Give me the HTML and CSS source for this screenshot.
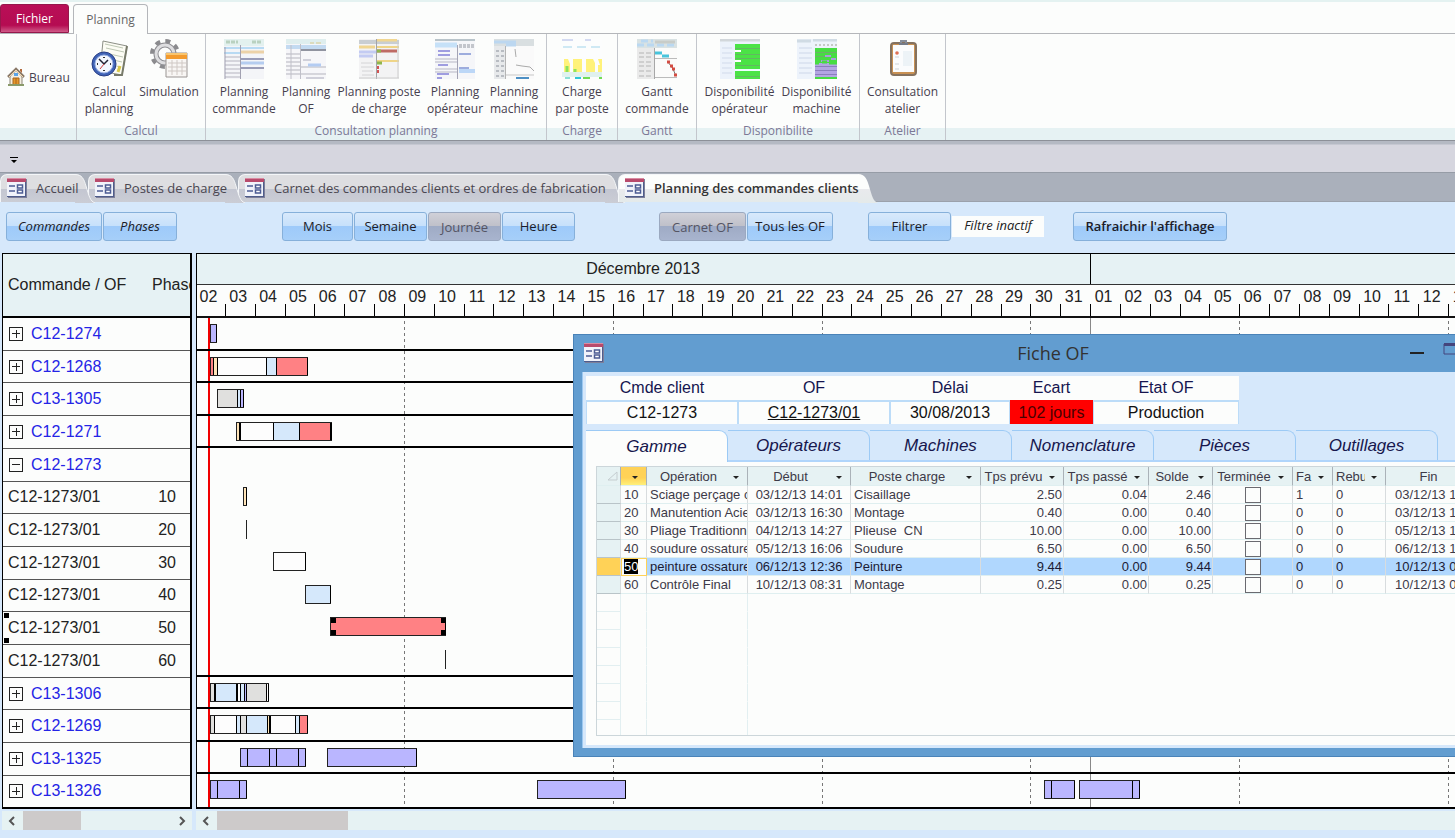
FILE: index.html
```html
<!DOCTYPE html>
<html lang="fr">
<head>
    <meta charset="UTF-8">
    <meta name="viewport" content="width=device-width, initial-scale=1.0">
    <title>Planning des commandes clients</title>
    <link rel="stylesheet" href="styles.css">
</head>
<body>
    <!-- Icône de formulaire réutilisée par les onglets et la fenêtre -->
    <svg class="sprite" aria-hidden="true">
        <defs>
            <linearGradient id="tab-fill" x1="0" y1="0" x2="0" y2="1">
                <stop offset="0" stop-color="#dedee1"/><stop offset=".5" stop-color="#dedee1"/><stop offset=".51" stop-color="#c3c6d1"/><stop offset="1" stop-color="#cbcdd5"/>
            </linearGradient>
            <linearGradient id="active-fill" x1="0" y1="0" x2="0" y2="1">
                <stop offset="0" stop-color="#fcfdfc"/><stop offset=".5" stop-color="#fcfdfc"/><stop offset=".51" stop-color="#e9eaed"/><stop offset="1" stop-color="#e4eaea"/>
            </linearGradient>
        </defs>
        <symbol id="form" viewBox="0 0 20 20">
            <path d="M1 1h19v19H1z" fill="#7d7f99"/>
            <path d="M0 0h18v18H0z" fill="#f1f3fa"/>
            <path d="M0 0h19v4H0z" fill="#b84a6c"/>
            <path d="M0 0h19v1H0z" fill="#d98ba2"/>
            <path d="M18 4h1v15h-1zM0 18h19v1H0z" fill="#4f5d8c"/>
            <path d="M2 8h6M2 13h6" stroke="#4c5c94" stroke-width="1.500"/>
            <path d="M10.500 7h5v3h-5zM10.500 12h5v3h-5z" fill="#fff" stroke="#4c5c94" stroke-width="1.500"/>
        </symbol>
        <symbol id="tail" viewBox="0 0 20 29">
            <path d="M0 0C7 0 9 5 11 12C14 22 15 27 20 29H0z" fill="url(#tab-fill)"/>
            <path d="M0 .5C7 .5 9 5 11 12C14 22 15 27 20 29" fill="none" stroke="#f4f6f8"/>
        </symbol>
        <symbol id="tail-active" viewBox="0 0 20 29">
            <path d="M0 0C7 0 9 5 11 12C14 22 15 27 20 29H0z" fill="url(#active-fill)"/>
        </symbol>
    </svg>

    <nav class="menu">
        <button class="fichier">Fichier</button>
        <button class="menu-tab">Planning</button>
    </nav>

    <header class="ribbon">
        <section class="group bureau">
            <button class="small">
                <svg width="18" height="20" viewBox="0 0 18 20"><path d="M3 9v9h12V9L9 3z" fill="#f4eee0" stroke="#8c8577"/><path d="M1 10l8-8 8 8" fill="none" stroke="#8a7968" stroke-width="2.500"/><path d="M2 10l7-7 7 7" fill="none" stroke="#f2d9b0"/><path d="M13 2h2v4l-2-2z" fill="#b26a3c"/><path d="M6 11h6v7H6z" fill="#e6972c" stroke="#a8651b"/><path d="M9 11v7" stroke="#a8651b"/><path d="M7 6h4v3H7z" fill="#5aa4e8"/><path d="M1 18h16" stroke="#8a9a6a" stroke-width="2"/></svg>
                Bureau
            </button>
            <h2></h2>
        </section>
        <section class="group calcul">
            <div class="buttons">
                <button>
                    <svg viewBox="0 0 40 40"><path d="M14 2l24 5-5 29-22-4z" fill="#fcfcf4" stroke="#8c8f86"/><path d="M38 7l-5 29-8 0" fill="none" stroke="#777a6a" stroke-width="2"/><path d="M17 9l18 4M16 14l18 4M20 20l13 3M22 26l10 2M16 5l18 4" stroke="#bdc7b4"/><path d="M31 27l-2 6" stroke="#d8c84a" stroke-width="3"/><circle cx="15" cy="25" r="12" fill="#3f62b5" stroke="#2a3f86"/><circle cx="15" cy="25" r="9" fill="#f4f7ff" stroke="#9bb2e4"/><path d="M15 18v1M15 31v1M8 25h1M21 25h1" stroke="#333" stroke-width="2"/><path d="M10 20l5 5 4-4" fill="none" stroke="#223" stroke-width="1.500"/><path d="M15 25l-4 5" stroke="#d13b3b"/></svg>
                    <span>Calcul<br>planning</span>
                </button>
                <button>
                    <svg viewBox="0 0 40 40"><circle cx="16" cy="15" r="13" fill="none" stroke="#8b8b8e" stroke-width="4" stroke-dasharray="5 5.200"/><circle cx="16" cy="15" r="9" fill="none" stroke="#8f8f93" stroke-width="5"/><circle cx="16" cy="15" r="9" fill="none" stroke="#dedee0" stroke-width="3"/><path d="M17 14h21v24H17z" fill="#f8f6f4" stroke="#9a9593"/><path d="M17 14h21v6H17z" fill="#f39b2e"/><path d="M17 14h21v2H17z" fill="#f9c56e"/><path d="M19 24h18M19 28h18M19 32h18M23 21v15M28 21v15M33 21v15" stroke="#cfc8c4"/></svg>
                    <span>Simulation</span>
                </button>
            </div>
            <h2>Calcul</h2>
        </section>
        <section class="group consult">
            <div class="buttons">
                <button>
                    <svg viewBox="0 0 40 40"><path d="M0 0h40v40H0z" fill="#f4f5f8"/><path d="M0 0h40v7H0z" fill="#e3f1ef"/><path d="M2 3h12M28 3h10" stroke="#b9d1c0" stroke-width="3" stroke-dasharray="4 1"/><path d="M0 9h40M0 14h16" stroke="#b8daf3" stroke-width="2"/><path d="M17 13h23" stroke="#ecd2a8" stroke-width="3"/><path d="M17 20h23M17 29h23" stroke="#9a9db8" stroke-width="2"/><path d="M17 24h23" stroke="#b5cdf0" stroke-width="3"/><path d="M1 18h15M1 22h15M1 26h15M1 30h15M1 34h15M1 38h15" stroke="#b5b4bf"/><path d="M1 8v32M16.500 6v34" stroke="#a2a1b1"/></svg>
                    <span>Planning<br>commande</span>
                </button>
                <button>
                    <svg viewBox="0 0 40 40"><path d="M0 0h40v40H0z" fill="#f6f6f9"/><path d="M0 0h40v5H0z" fill="#dfeeee"/><path d="M0 8h40" stroke="#c3daf1" stroke-width="4"/><path d="M14 11h26" stroke="#90939f" stroke-width="2"/><path d="M0 15h14M0 19h14M0 23h14M0 27h14M0 31h14M0 35h14M14 28h26M14 35h26" stroke="#b5b5be"/><path d="M5 6v34M14.500 5v35" stroke="#c0c0c9"/><path d="M22 26h13" stroke="#b4ccf2" stroke-width="3"/><path d="M17 21h8M20 39h18" stroke="#aab"/><path d="M24 4h4M30 4h5" stroke="#d8c88c"/></svg>
                    <span>Planning<br>OF</span>
                </button>
                <button>
                    <svg viewBox="0 0 40 40"><path d="M0 0h40v40H0z" fill="#f3f3f4"/><path d="M0 3h40" stroke="#c9ced2" stroke-width="4"/><path d="M18 1h20M0 8h16" stroke="#f0d691" stroke-width="3"/><path d="M0 13h18M0 17h14" stroke="#c3cbf2" stroke-width="3"/><path d="M18 8h22M18 22h22" stroke="#efd588" stroke-width="2"/><path d="M18 12h20" stroke="#bf6b65" stroke-width="3"/><path d="M18 12h4M18 24h5" stroke="#8fb64d" stroke-width="3"/><path d="M19 27v3M19 31v3" stroke="#d35454" stroke-width="2"/><path d="M2 24h12M2 28h13M3 32h11M3 36h12" stroke="#d4d4d6"/><path d="M17.500 0v40" stroke="#a2a4a7"/><path d="M0 39h40M39 4v35" stroke="#ccc"/></svg>
                    <span>Planning poste<br>de charge</span>
                </button>
                <button>
                    <svg viewBox="0 0 40 40"><path d="M0 0h40v40H0z" fill="#f5f6f9"/><path d="M0 1h40" stroke="#b9c4ca" stroke-width="2"/><path d="M0 6h22" stroke="#c6e1f8" stroke-width="5"/><path d="M24 7h16" stroke="#c3c6cc" stroke-width="4" stroke-dasharray="3 1"/><path d="M3 12h12M3 16h12M3 26h10M2 35h12M2 39h5" stroke="#9f9de0" stroke-width="2"/><path d="M0 20h22M0 23h22M0 30h22M0 33h22" stroke="#b7b7c5"/><path d="M22.500 6v34" stroke="#a3a3b4"/><path d="M24 15h12M24 29h10" stroke="#9dacdd" stroke-width="2"/><path d="M24 32h16" stroke="#bcd7f7" stroke-width="4"/></svg>
                    <span>Planning<br>opérateur</span>
                </button>
                <button>
                    <svg viewBox="0 0 40 40"><path d="M0 0h40v40H0z" fill="#fafafa"/><path d="M0 0h40v7H0z" fill="#d9dfe1"/><path d="M0 3h22M12 6h10" stroke="#bcd7f0" stroke-width="3"/><path d="M0 7h12v33H0z" fill="#e7e9eb"/><path d="M2 12h8M2 17h8M2 22h8M2 27h8M2 32h8M2 37h8" stroke="#b8bcc2" stroke-width="2" stroke-dasharray="3 2"/><path d="M11.500 7v33" stroke="#b4b4b4"/><path d="M21 10l1 8M22 26l6 1 8 1 4 4" stroke="#aaa" fill="none"/><path d="M12 36h28" stroke="#c7c7c7"/><path d="M22 39h13" stroke="#4d8fc4" stroke-width="2"/></svg>
                    <span>Planning<br>machine</span>
                </button>
            </div>
            <h2>Consultation planning</h2>
        </section>
        <section class="group charge">
            <div class="buttons">
                <button>
                    <svg viewBox="0 0 40 40"><path d="M0 0h40v40H0z" fill="#fcfdfd"/><path d="M0 1h11M23 1h6" stroke="#abb7e6"/><path d="M1 8h38" stroke="#cfe9f4" stroke-width="2" stroke-dasharray="9 5"/><path d="M2 20h4l2 5v8H2zM11 20h9v13h-9zM24 20h7l2 4v9h-9zM36 20h4v13h-4v-7h2z" fill="#fff27a"/><path d="M5 27v6M13 30v3" stroke="#8ce35c" stroke-width="3"/><path d="M0 33h40v5H0z" fill="#e0f1ef"/><path d="M13 39h6" stroke="#2cc6d8" stroke-width="2"/><path d="M21 39h7M37 39h3" stroke="#72dc54" stroke-width="2"/><path d="M3 39h5" stroke="#8ce0d6" stroke-width="2"/></svg>
                    <span>Charge<br>par poste</span>
                </button>
            </div>
            <h2>Charge</h2>
        </section>
        <section class="group gantt-group">
            <div class="buttons">
                <button>
                    <svg viewBox="0 0 40 40"><path d="M0 0h40v40H0z" fill="#fbfbfa"/><path d="M0 0h40v9H0z" fill="#d9e2e3"/><path d="M0 6h40M4 2h12" stroke="#bad8f1" stroke-width="3" stroke-dasharray="7 3"/><path d="M18 3h20" stroke="#c8ccc8" stroke-width="3"/><path d="M0 9h17v31H0z" fill="#eaeaea"/><path d="M2 14h14M2 18h14M2 23h14M2 27h14M2 32h14M2 37h14" stroke="#b4b4b4" stroke-dasharray="5 2"/><path d="M17.500 9v31" stroke="#a7a7a7"/><path d="M18 14h7M25 17h7" stroke="#48c4db" stroke-width="3"/><path d="M18 19.500h22M18 38.500h22" stroke="#bbb"/><path d="M31 23l5 7 3 7" stroke="#777" fill="none"/><path d="M30 23h3M33 27h3M35 30h3M37 36h3" stroke="#d34c42" stroke-width="3"/></svg>
                    <span>Gantt<br>commande</span>
                </button>
            </div>
            <h2>Gantt</h2>
        </section>
        <section class="group dispo">
            <div class="buttons">
                <button>
                    <svg viewBox="0 0 40 40"><path d="M0 0h40v40H0z" fill="#ecf2fb"/><path d="M0 1h40" stroke="#d2d7db" stroke-width="3"/><path d="M15 5h25v35H15z" fill="#4be346"/><path d="M15 12h6M15 22h6" stroke="#fff" stroke-width="2"/><path d="M15 9.500h25M15 15.500h25M15 19.500h25M15 26.500h25M15 37.500h25" stroke="#62b861"/><path d="M15 31h25" stroke="#eff" stroke-width="2"/><path d="M2 9h10M2 14h10M2 19h10M2 24h10M2 29h10M2 34h10" stroke="#d1daeb"/></svg>
                    <span>Disponibilité<br>opérateur</span>
                </button>
                <button>
                    <svg viewBox="0 0 40 40"><path d="M0 0h40v40H0z" fill="#edf3fb"/><path d="M0 2h14M16 1h24" stroke="#d0dbe4" stroke-width="3"/><path d="M18 9h22v31H18z" fill="#47dc43"/><path d="M18 6h22" stroke="#c5c9c4" stroke-width="2" stroke-dasharray="2 2"/><path d="M24 22h8M34 20h5M28 17h6" stroke="#a99bdd" stroke-width="2"/><path d="M18 24h22v14H18z" fill="#b3a5e3"/><path d="M18 27.500h22M18 31.500h22M18 35.500h22" stroke="#8b7fbd"/><path d="M18 24h4M25 23h5M32 24h8" stroke="#47dc43" stroke-width="3"/><path d="M18 13.500h22M18 17.500h10" stroke="#6dae6a"/><path d="M2 9h13M2 14h13M2 19h13M2 24h13M2 29h13M2 34h13" stroke="#cdd7e9"/></svg>
                    <span>Disponibilité<br>machine</span>
                </button>
            </div>
            <h2>Disponibilite</h2>
        </section>
        <section class="group atelier">
            <div class="buttons">
                <button>
                    <svg viewBox="0 0 40 40"><rect x="8" y="4" width="25" height="32" rx="3" fill="#c99153" stroke="#85725f" stroke-width="2"/><path d="M10 6h21v27H10z" fill="#fbfcfd"/><path d="M20 12h9v15h-9z" fill="#edf3f7"/><path d="M16 4h9v2h-9z" fill="#757b88"/><path d="M18 4V2h5v2" fill="none" stroke="#868d9a" stroke-width="2"/><circle cx="14" cy="14" r="1.800" fill="#e07054"/><path d="M12 18h4M12 25h4M12 30h4" stroke="#cdd3d8"/></svg>
                    <span>Consultation<br>atelier</span>
                </button>
            </div>
            <h2>Atelier</h2>
        </section>
        <div class="group-rest"></div>
    </header>

    <div class="quickbar">
        <button aria-label="Personnaliser"><svg width="8" height="7" viewBox="0 0 8 7"><path d="M0 0h8v1H0zM1 3h6L4 6z"/></svg></button>
    </div>

    <nav class="doc-tabs">
        <a href="#" class="doc-tab t1"><svg class="icon"><use href="#form"/></svg><span>Accueil</span><svg class="tail"><use href="#tail"/></svg></a>
        <a href="#" class="doc-tab t2"><svg class="icon"><use href="#form"/></svg><span>Postes de charge</span><svg class="tail"><use href="#tail"/></svg></a>
        <a href="#" class="doc-tab t3"><svg class="icon"><use href="#form"/></svg><span>Carnet des commandes clients et ordres de fabrication</span><svg class="tail"><use href="#tail"/></svg></a>
        <a href="#" class="doc-tab t4 active"><svg class="icon"><use href="#form"/></svg><span>Planning des commandes clients</span><svg class="tail"><use href="#tail-active"/></svg></a>
    </nav>

    <main>
        <div class="toolbar">
            <div class="set niveau"><button>Commandes</button><button>Phases</button></div>
            <div class="set echelle"><button>Mois</button><button>Semaine</button><button class="on">Journée</button><button>Heure</button></div>
            <div class="set liste"><button class="on">Carnet OF</button><button>Tous les OF</button></div>
            <div class="set filtre"><button>Filtrer</button><output>Filtre inactif</output></div>
            <div class="set maj"><button>Rafraichir l'affichage</button></div>
        </div>

        <div class="panels">
            <div class="left">
                <table class="orders">
                    <thead>
                        <tr><th>Commande / OF</th><th>Phase</th></tr>
                    </thead>
                    <tbody>
                        <tr><td colspan="2"><button class="plus" aria-label="Ouvrir"></button><a href="#">C12-1274</a></td></tr>
                        <tr><td colspan="2"><button class="plus" aria-label="Ouvrir"></button><a href="#">C12-1268</a></td></tr>
                        <tr><td colspan="2"><button class="plus" aria-label="Ouvrir"></button><a href="#">C13-1305</a></td></tr>
                        <tr><td colspan="2"><button class="plus" aria-label="Ouvrir"></button><a href="#">C12-1271</a></td></tr>
                        <tr><td colspan="2"><button class="plus minus" aria-label="Fermer"></button><a href="#">C12-1273</a></td></tr>
                        <tr><td>C12-1273/01</td><td>10</td></tr>
                        <tr><td>C12-1273/01</td><td>20</td></tr>
                        <tr><td>C12-1273/01</td><td>30</td></tr>
                        <tr><td>C12-1273/01</td><td>40</td></tr>
                        <tr class="picked"><td>C12-1273/01</td><td>50</td></tr>
                        <tr><td>C12-1273/01</td><td>60</td></tr>
                        <tr><td colspan="2"><button class="plus" aria-label="Ouvrir"></button><a href="#">C13-1306</a></td></tr>
                        <tr><td colspan="2"><button class="plus" aria-label="Ouvrir"></button><a href="#">C12-1269</a></td></tr>
                        <tr><td colspan="2"><button class="plus" aria-label="Ouvrir"></button><a href="#">C13-1325</a></td></tr>
                        <tr><td colspan="2"><button class="plus" aria-label="Ouvrir"></button><a href="#">C13-1326</a></td></tr>
                    </tbody>
                </table>
                <div class="scroll">
                    <svg viewBox="0 0 8 10"><path d="M6 1L2 5l4 4"/></svg>
                    <div class="thumb"></div>
                    <svg viewBox="0 0 8 10"><path d="M2 1l4 4-4 4"/></svg>
                </div>
            </div>

            <div class="right">
                <div class="chart">
                    <div class="months days-grid"><span>Décembre 2013</span><span></span></div>
                    <div class="days days-grid" id="days"></div>
                    <div class="body">
                        <div class="weeks days-grid"><i></i><i></i><i></i><i></i><i></i><i></i></div>
                        <div class="weeks days-grid"><b></b></div>
                        <div class="today"></div>
                        <div class="rows" id="rows"></div>
                    </div>
                </div>
                <div class="scroll">
                    <svg viewBox="0 0 8 10"><path d="M6 1L2 5l4 4"/></svg>
                    <div class="thumb"></div>
                </div>
            </div>
        </div>
    </main>

    <section class="window">
        <div class="title">
            <svg class="icon"><use href="#form"/></svg>
            <h1>Fiche OF</h1>
            <div class="controls">
                <button aria-label="Réduire"><svg width="14" height="12"><path d="M0 9h14v2H0z" fill="#222"/></svg></button>
                <button aria-label="Agrandir"><svg width="14" height="12"><path d="M1 1h12v10H1z" fill="none" stroke="#44447c"/><path d="M1 0h12v3H1z" fill="#44447c"/></svg></button>
                <button aria-label="Fermer"><svg width="14" height="12"><path d="M2 1l10 10M12 1L2 11" stroke="#222"/></svg></button>
            </div>
        </div>
        <div class="inner">
            <table class="fiche">
                <tr><th>Cmde client</th><th>OF</th><th>Délai</th><th>Ecart</th><th>Etat OF</th></tr>
                <tr><td>C12-1273</td><td><a href="#">C12-1273/01</a></td><td>30/08/2013</td><td class="retard">102 jours</td><td>Production</td></tr>
            </table>
            <div class="fiche-tabs">
                <button class="active">Gamme</button>
                <button>Opérateurs</button>
                <button>Machines</button>
                <button>Nomenclature</button>
                <button>Pièces</button>
                <button>Outillages</button>
            </div>
            <div class="page">
                <table class="gamme">
                    <colgroup><col class="c-sel"><col class="c-num"><col class="c-op"><col class="c-deb"><col class="c-poste"><col class="c-prevu"><col class="c-passe"><col class="c-solde"><col class="c-term"><col class="c-fa"><col class="c-rebu"><col class="c-fin"></colgroup>
                    <thead>
                        <tr><th><svg width="12" height="10" viewBox="0 0 12 10"><path d="M10 1L1 9h9z" fill="none" stroke="#c5cdd0"/></svg></th><th><i></i></th><th>Opération<i></i></th><th>Début<i></i></th><th>Poste charge<i></i></th><th>Tps prévu<i></i></th><th>Tps passé<i></i></th><th>Solde<i></i></th><th>Terminée<i></i></th><th>Fa<i></i></th><th><span>Rebut</span><i></i></th><th>Fin<i></i></th></tr>
                    </thead>
                    <tbody id="gamme"></tbody>
                </table>
            </div>
        </div>
    </section>

    <script src="script.js"></script>
</body>
</html>
```
FILE: styles.css
```css
* {
    box-sizing: border-box;
}
body {
    margin: 0;
    position: relative;
    min-height: 100vh;
    overflow: hidden;
    background-color: #d6e8fb;
    font-family: "Open Sans", "Noto Sans", sans-serif;
    font-size: 13px;
    color: #222;
}
button {
    font: inherit;
    color: inherit;
    background: none;
    border: none;
    padding: 0;
    white-space: nowrap;
}
a {
    color: inherit;
    text-decoration: none;
}
h1, h2 {
    margin: 0;
    font-weight: normal;
}
.sprite {
    position: absolute;
    width: 0;
    height: 0;
}
.icon {
    flex: none;
    width: 20px;
    height: 20px;
}

/* Menu */
.menu {
    display: flex;
    gap: 4px;
    height: 34px;
    padding-top: 2px;
    border-top: 2px solid #e4f2f1;
    border-bottom: 1px solid #b4b6ba;
    background-color: #fcfdfc;
    font-size: 12px;
}
.fichier {
    width: 69px;
    height: 29px;
    border: 1px solid #96184c;
    border-radius: 3px 3px 0 0;
    background: linear-gradient(#b90f57, #b50c52 75%, #d05a88);
    color: #fff;
}
.menu-tab {
    width: 75px;
    height: 30px;
    border: 1px solid #b4b6ba;
    border-bottom: none;
    border-radius: 4px 4px 0 0;
    background-color: #fcfdfc;
    color: #666;
}

/* Ruban */
.ribbon {
    display: flex;
    height: 107px;
    background-color: #fcfdfc;
    border-bottom: 1px solid #8c9098;
    font-size: 12px;
    line-height: 17px;
    color: #46404e;
}
.group {
    flex: none;
    display: flex;
    flex-direction: column;
    justify-content: space-between;
    border-right: 1px solid #c3c6cc;
}
.group h2, .group-rest {
    font-size: 12px;
    height: 12px;
    line-height: 5px;
    text-align: center;
    color: #7c7896;
    background-color: #e6f2f3;
}
.group-rest {
    flex: 1;
    align-self: flex-end;
}
.buttons {
    display: flex;
    justify-content: center;
    padding-top: 5px;
}
.buttons button {
    display: flex;
    flex-direction: column;
    align-items: center;
    gap: 4px;
    width: 60px;
}
.buttons svg {
    width: 40px;
    height: 40px;
}
.bureau { width: 77px; }
.calcul { width: 129px; }
.consult { width: 341px; }
.charge { width: 71px; }
.gantt-group { width: 79px; }
.dispo { width: 163px; }
.atelier { width: 86px; }
.calcul .buttons { padding-right: 4px; }
.consult button:nth-child(1) { width: 64px; }
.consult button:nth-child(3) { width: 86px; }
.consult button:nth-child(4) { width: 66px; }
.consult button:nth-child(5) { width: 52px; }
.dispo button { width: 77px; }
.small {
    display: flex;
    align-items: center;
    gap: 4px;
    padding: 33px 0 0 7px;
}

.quickbar {
    display: flex;
    align-items: center;
    height: 31px;
    padding: 4px 0 0 10px;
    background: linear-gradient(#b4b9c3 3px, #d6d6df 4px);
}

/* Onglets des documents */
.doc-tabs {
    display: flex;
    height: 30px;
    padding-top: 1px;
    border-top: 1px solid #969ca6;
    border-bottom: 1px solid #9ba1ab;
    background-color: #aab0bb;
    color: #4a4650;
}
.doc-tab {
    position: relative;
    display: flex;
    align-items: center;
    gap: 9px;
    height: 28px;
    margin-right: 13px;
    padding: 0 0 1px 6px;
    border-top: 1px solid #f4f6f8;
    border-left: 1px solid #f4f6f8;
    border-radius: 7px 0 0 0;
    background: linear-gradient(#dedee1 50%, #c3c6d1 51%, #cbcdd5);
    white-space: nowrap;
}
.doc-tab span {
    position: relative;
    z-index: 1;
}
.tail {
    position: absolute;
    left: 100%;
    top: -1px;
    width: 20px;
    height: 29px;
}
.t1 { z-index: 4; width: 75px; }
.t2 { z-index: 3; width: 137px; }
.t3 { z-index: 2; width: 367px; }
.t4 { z-index: 5; width: 240px; }
.doc-tab.active {
    background: linear-gradient(#fcfdfc 50%, #e9eaed 51%, #e4eaea);
    font-weight: 600;
    color: #333;
}

/* Barre de boutons */
.toolbar {
    display: flex;
    padding: 10px 0 0 6px;
    height: 51px;
}
.set {
    display: flex;
    gap: 1px;
    height: 29px;
}
.set button {
    padding-bottom: 2px;
    border: 1px solid #86b0da;
    border-radius: 3px;
    background: linear-gradient(#d8e9fb, #c6e0fb 49%, #9ecafa 50%, #a6cff9);
    color: #1c1c28;
}
.set .on {
    padding: 0;
    background: linear-gradient(#d0d0d8, #bfc0c9 49%, #9fabc5 50%, #a8b4ce);
    border-color: #9ba9c0;
    color: #545464;
}
.niveau { margin-right: 105px; font-style: italic; }
.niveau button { width: 96px; }
.niveau button + button { width: 74px; }
.echelle { margin-right: 84px; }
.echelle button { width: 73px; }
.echelle button:first-child { width: 71px; }
.liste { margin-right: 35px; }
.liste button { width: 87px; }
.liste button + button { width: 86px; }
.filtre { margin-right: 29px; align-items: flex-start; }
.filtre button { width: 83px; height: 29px; }
.filtre output {
    width: 92px;
    height: 21px;
    margin-top: 4px;
    background-color: #fcfdfc;
    font-size: 13px;
    font-style: italic;
    line-height: 19px;
    text-align: center;
}
.maj button { width: 154px; font-weight: 600; }

/* Panneaux du planning */
.panels {
    display: flex;
    gap: 4px;
    padding-left: 2px;
    font-family: "Liberation Sans", Arial, sans-serif;
    font-size: 16px;
}
.left {
    flex: none;
    width: 190px;
}
.orders {
    width: 190px;
    height: 556px;
    table-layout: fixed;
    border-collapse: separate;
    border-spacing: 0;
    border: 1px solid #000;
    border-right-width: 2px;
    border-bottom-width: 2px;
    background-color: #fcfdfc;
}
.orders th {
    height: 64px;
    padding: 0 0 0 5px;
    border-bottom: 2px solid #000;
    background-color: #e6f2f4;
    font-weight: normal;
    text-align: left;
    white-space: nowrap;
    overflow: hidden;
}
.orders th + th {
    width: 43px;
}
.orders td {
    position: relative;
    padding: 0 0 0 5px;
    border-bottom: 1px solid #555;
}
.orders tr:last-child td {
    border-bottom: none;
}
.orders td + td {
    padding: 0 14px 0 0;
    text-align: right;
}
.orders a {
    color: #2424e6;
}
.plus {
    display: inline-block;
    width: 14px;
    height: 14px;
    margin: 0 8px 0 1px;
    border: 1px solid #222;
    vertical-align: -1px;
    background: linear-gradient(#222, #222) center / 8px 1px no-repeat, linear-gradient(#222, #222) center / 1px 8px no-repeat;
}
.plus.minus {
    background: linear-gradient(#222, #222) center / 8px 1px no-repeat;
}
.picked td:first-child::before, .picked td:first-child::after {
    content: "";
    position: absolute;
    left: 1px;
    top: 1px;
    width: 5px;
    height: 5px;
    background-color: #000;
}
.picked td:first-child::after {
    top: auto;
    bottom: 1px;
}
.scroll {
    display: flex;
    align-items: center;
    height: 19px;
    margin-top: 2px;
    padding: 0 6px;
    background-color: #e6f2f3;
}
.scroll svg {
    flex: none;
    width: 8px;
    height: 10px;
    fill: none;
    stroke: #555;
    stroke-width: 2;
}
.thumb {
    width: 58px;
    height: 19px;
    margin: 0 auto 0 7px;
    background-color: #cdcaca;
}
.right {
    flex: 1;
    min-width: 0;
}
.right .thumb {
    width: 131px;
}
.chart {
    overflow: hidden;
    border: solid #000;
    border-width: 1px 0 2px 1px;
    background-color: #fcfdfc;
}
.days-grid {
    display: grid;
    grid-template-columns: repeat(43, 1fr);
    width: 1283px;
    margin-left: -1px;
}
.months {
    height: 31px;
    line-height: 30px;
    border-bottom: 1px solid #333;
    background-color: #e6f2f4;
    text-align: center;
}
.months span:first-child {
    grid-column: span 30;
    border-right: 1px solid #000;
}
.days {
    height: 33px;
    border-bottom: 2px solid #111;
}
.days span {
    padding-right: 5px;
    line-height: 24px;
    text-align: center;
    background: linear-gradient(#000, #000) right bottom / 1px 12px no-repeat;
}
.body {
    position: relative;
    height: 489px;
}
.weeks {
    position: absolute;
    top: 0;
    bottom: 0;
    left: 0;
}
.weeks i {
    grid-column: span 7;
    background: repeating-linear-gradient(transparent 0 3px, #777 3px 6px) right / 1px 100% no-repeat;
}
.weeks b {
    grid-column: span 30;
    border-right: 1px solid #888;
}
.today {
    position: absolute;
    top: 0;
    bottom: 0;
    left: 11px;
    width: 2px;
    background-color: #f00000;
}
.rows {
    position: relative;
    display: grid;
    grid-template-rows: repeat(15, 1fr);
    height: 100%;
    margin-left: -1px;
}
.row {
    position: relative;
    border-bottom: 2px solid #000;
}
.row.open, .row:last-child {
    border-bottom-color: transparent;
}
.bar {
    position: absolute;
    top: 6px;
    display: flex;
    height: 19px;
    border: solid #222;
    border-width: 1px 0 1px 1px;
}
.bar span {
    flex: none;
    border-right: 1px solid #000;
}
.bar .thick {
    border-right-width: 2px;
}
.violet { background-color: #bab6ff; }
.rouge { background-color: #ff8184; }
.bleu { background-color: #d5e8fb; }
.beige { background-color: #ffe4b8; }
.gris { background-color: #e0e0de; }
.blanc { background-color: #fdfdfd; }
.bar.picked {
    background:
        linear-gradient(#000, #000) left top / 5px 5px no-repeat,
        linear-gradient(#000, #000) right top / 5px 5px no-repeat,
        linear-gradient(#000, #000) left bottom / 5px 5px no-repeat,
        linear-gradient(#000, #000) right bottom / 5px 5px no-repeat,
        #ff8184;
}
.bar.picked span {
    background: none;
}

/* Fenêtre Fiche OF, posée sur le planning */
.window {
    position: absolute;
    z-index: 10;
    top: 334px;
    left: 573px;
    right: -76px;
    border: 1px solid #4a83b8;
    padding: 0 8px 8px;
    background-color: #629dd0;
    font-family: "Liberation Sans", Arial, sans-serif;
    font-size: 16px;
}
.title {
    display: grid;
    grid-template-columns: 1fr auto 1fr;
    align-items: center;
    height: 37px;
    padding: 0 0 2px 2px;
}
.title h1 {
    font: 18px "Open Sans", sans-serif;
    color: #333;
}
.controls {
    display: flex;
    justify-content: flex-end;
    gap: 19px;
    padding: 0 32px 8px 0;
}
.controls svg {
    display: block;
}
.inner {
    padding: 4px 0 3px 3px;
    border-left: 1px solid #9cc8f0;
    background-color: #d6e8fb;
}
.fiche {
    width: 653px;
    table-layout: fixed;
    border-collapse: separate;
    border-spacing: 0;
    text-align: center;
}
.fiche th, .fiche td {
    height: 24px;
    padding: 0;
    background-color: #fcfdfc;
    font-weight: normal;
    color: #15154f;
}
.fiche td {
    border: solid #bcdcf8;
    border-width: 2px 1px 0 1px;
    color: #111;
}
.fiche th:nth-child(1), .fiche th:nth-child(2) { width: 152px; }
.fiche th:nth-child(3) { width: 120px; }
.fiche th:nth-child(4) { width: 83px; }
.fiche a {
    text-decoration: underline;
}
.fiche .retard {
    background-color: #f00;
    border-color: #f00;
    color: #4a0000;
}
.fiche-tabs {
    display: flex;
    height: 32px;
    margin-top: 6px;
    border-bottom: 2px solid #b0d5fb;
}
.fiche-tabs button {
    width: 142px;
    height: 30px;
    border: 1px solid #9ccaf5;
    border-left: none;
    border-bottom: none;
    border-radius: 0 9px 0 0;
    font-size: 17px;
    font-style: italic;
    color: #17174d;
}
.fiche-tabs .active {
    height: 32px;
    background-color: #fcfdfc;
}
.page {
    height: 283px;
    padding: 4px 0 0 10px;
    background-color: #fcfdfc;
}
.gamme {
    width: 893px;
    table-layout: fixed;
    border-collapse: separate;
    border-spacing: 0;
    border: solid #ccd6da;
    border-width: 1px 0 1px 1px;
    font-size: 13px;
    color: #3d3a48;
}
.gamme th, .gamme td {
    height: 18px;
    padding: 0 3px;
    line-height: 17px;
    overflow: hidden;
    white-space: nowrap;
    border-right: 1px solid #d8dcde;
    border-bottom: 1px solid #dfeff0;
}
.gamme th {
    position: relative;
    height: 19px;
    padding-right: 20px;
    background-color: #e6f2f3;
    border-right-color: #aab2b8;
    font-weight: normal;
    text-align: center;
}
.gamme th:first-child {
    padding: 0 0 0 8px;
}
.gamme th:nth-child(2) {
    background: linear-gradient(#ffd257 60%, #fff07a);
}
.gamme th i {
    position: absolute;
    right: 8px;
    top: 9px;
    border: 3px solid transparent;
    border-top-color: #222;
}
.gamme th span {
    display: block;
    overflow: hidden;
}
.gamme th:nth-child(10), .gamme th:nth-child(11) {
    text-align: left;
}
.gamme td:first-child {
    background-color: #e6f2f3;
    border-bottom-color: #b9c4c8;
}
.gamme td:nth-child(4) {
    text-align: center;
}
.gamme td:nth-child(6), .gamme td:nth-child(7), .gamme td:nth-child(8) {
    padding-right: 1px;
    text-align: right;
}
.gamme td:nth-child(9) {
    text-align: center;
}
.gamme td:nth-child(12) {
    padding-left: 9px;
}
.gamme input {
    appearance: none;
    display: block;
    width: 16px;
    height: 16px;
    margin: 0 auto;
    border: 1px solid #6a6a70;
    background-color: #fcfdfc;
}
.gamme .current td {
    background-color: #b0d7fe;
    color: #1b1b35;
}
.gamme .current td:first-child {
    background-color: #ffd257;
}
.gamme .current td:nth-child(2) {
    padding: 0 2px;
    line-height: 14px;
    border: 1px solid #ffd257;
    background-color: #fcfdfc;
}
.gamme mark {
    background-color: #000;
    color: #fff;
}
.gamme .empty td {
    border-color: transparent;
}
.gamme .empty td:first-child {
    background: none;
    border-color: #e2eff1;
}
.gamme .empty td:nth-child(2), .gamme .empty td:nth-child(3) {
    border-right-color: #e2eff1;
}
.gamme tr:last-child td {
    height: 15px;
    border-bottom: none;
}
.c-sel { width: 24px; }
.c-num { width: 26px; }
.c-op { width: 101px; }
.c-deb { width: 103px; }
.c-poste { width: 130px; }
.c-prevu { width: 83px; }
.c-passe { width: 85px; }
.c-solde { width: 64px; }
.c-term { width: 80px; }
.c-fa { width: 40px; }
.c-rebu { width: 53px; }
```
FILE: script.js
```js
// Jours affichés : du 2 décembre au 13 janvier
const days = document.getElementById('days');
for (let i = 0; i < 43; i++) {
    const span = document.createElement('span');
    const day = i < 30 ? i + 2 : i - 29;
    span.textContent = String(day).padStart(2, '0');
    days.appendChild(span);
}

// Une ligne = liste de barres, une barre = départ puis segments [largeur, couleur]
const rows = [
    [{ x: 14, s: [[6, 'violet']] }],
    [{ x: 14, s: [[3, 'rouge'], [4, 'beige'], [49, 'blanc'], [10, 'bleu'], [31, 'rouge']] }],
    [{ x: 21, s: [[20, 'gris'], [3, 'bleu'], [3, 'violet']] }],
    [{ x: 40, s: [[4, 'beige thick'], [33, 'blanc'], [26, 'bleu'], [32, 'rouge thick']] }],
    [],
    [{ x: 47, s: [[3, 'beige']] }],
    [{ x: 50, s: [] }],
    [{ x: 77, s: [[32, 'blanc']] }],
    [{ x: 109, s: [[25, 'bleu']] }],
    [{ x: 134, s: [[115, 'rouge']], picked: true }],
    [{ x: 249, s: [] }],
    [{ x: 14, s: [[5, 'gris thick'], [22, 'bleu thick'], [3, 'blanc'], [4, 'bleu'], [2, 'violet'], [20, 'gris'], [2, 'blanc']] }],
    [{ x: 14, s: [[4, 'gris'], [22, 'blanc'], [4, 'bleu'], [6, 'gris'], [21, 'bleu'], [3, 'beige thick'], [25, 'blanc'], [4, 'bleu'], [8, 'rouge']] }],
    [{ x: 44, s: [[7, 'violet'], [22, 'violet'], [7, 'violet'], [22, 'violet'], [7, 'violet']] },
     { x: 131, s: [[89, 'violet']] }],
    [{ x: 14, s: [[7, 'violet'], [22, 'violet'], [7, 'violet']] },
     { x: 341, s: [[88, 'violet']] },
     { x: 848, s: [[7, 'violet'], [23, 'violet']] },
     { x: 883, s: [[53, 'violet'], [7, 'violet']] }]
];
const rowsDiv = document.getElementById('rows');
rows.forEach((bars, i) => {
    const html = bars.map(b =>
        `<div class="bar${b.picked ? ' picked' : ''}" style="left:${b.x}px">` +
        b.s.map(([w, c]) => `<span class="${c}" style="width:${w}px"></span>`).join('') +
        '</div>').join('');
    const open = i >= 4 && i <= 9 ? ' open' : '';
    rowsDiv.insertAdjacentHTML('beforeend', `<div class="row${open}">${html}</div>`);
});

// Gamme de l'OF
const gamme = [
    ['10', 'Sciage perçage cintrage', '03/12/13 14:01', 'Cisaillage', '2.50', '0.04', '2.46', '1', '03/12/13 16:30'],
    ['20', 'Manutention Acier', '03/12/13 16:30', 'Montage', '0.40', '0.00', '0.40', '0', '03/12/13 16:54'],
    ['30', 'Pliage Traditionnel', '04/12/13 14:27', 'Plieuse&nbsp; CN', '10.00', '0.00', '10.00', '0', '05/12/13 16:06'],
    ['40', 'soudure ossature', '05/12/13 16:06', 'Soudure', '6.50', '0.00', '6.50', '0', '06/12/13 12:36'],
    ['50', 'peinture ossature', '06/12/13 12:36', 'Peinture', '9.44', '0.00', '9.44', '0', '10/12/13 08:31'],
    ['60', 'Contrôle Final', '10/12/13 08:31', 'Montage', '0.25', '0.00', '0.25', '0', '10/12/13 08:46']
];
const tbody = document.getElementById('gamme');
gamme.forEach(g => {
    const current = g[0] === '50';
    const num = current ? `<mark>${g[0]}</mark>` : g[0];
    tbody.insertAdjacentHTML('beforeend', `<tr class="${current ? 'current' : ''}">
        <td></td><td>${num}</td><td>${g[1]}</td><td>${g[2]}</td><td>${g[3]}</td>
        <td>${g[4]}</td><td>${g[5]}</td><td>${g[6]}</td>
        <td><input type="checkbox" aria-label="Terminée ${g[0]}"></td>
        <td>${g[7]}</td><td>0</td><td>${g[8]}</td></tr>`);
});
for (let i = 0; i < 8; i++) {
    tbody.insertAdjacentHTML('beforeend', '<tr class="empty">' + '<td></td>'.repeat(12) + '</tr>');
}
```
